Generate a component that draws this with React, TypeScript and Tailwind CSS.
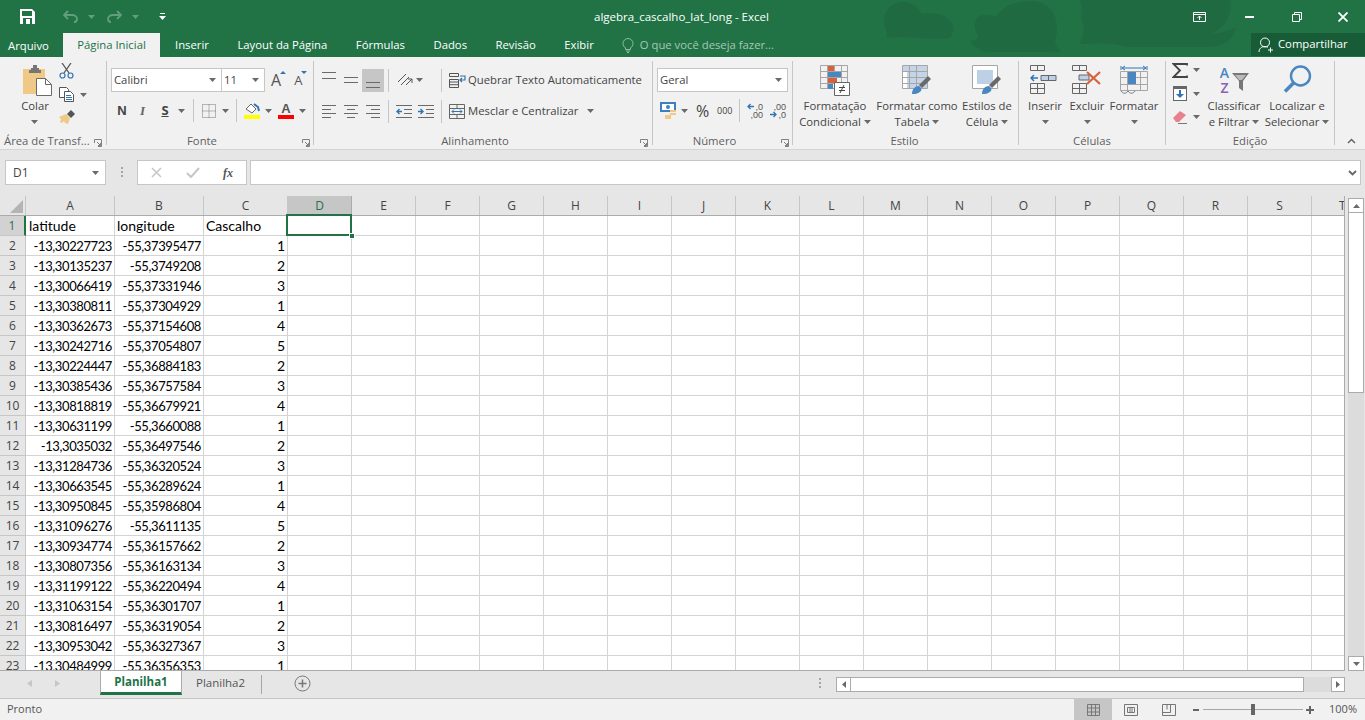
import type { ReactNode } from 'react';

const rows: [string, string, string][] = [
  ['-13,30227723', '-55,37395477', '1'],
  ['-13,30135237', '-55,3749208', '2'],
  ['-13,30066419', '-55,37331946', '3'],
  ['-13,30380811', '-55,37304929', '1'],
  ['-13,30362673', '-55,37154608', '4'],
  ['-13,30242716', '-55,37054807', '5'],
  ['-13,30224447', '-55,36884183', '2'],
  ['-13,30385436', '-55,36757584', '3'],
  ['-13,30818819', '-55,36679921', '4'],
  ['-13,30631199', '-55,3660088', '1'],
  ['-13,3035032', '-55,36497546', '2'],
  ['-13,31284736', '-55,36320524', '3'],
  ['-13,30663545', '-55,36289624', '1'],
  ['-13,30950845', '-55,35986804', '4'],
  ['-13,31096276', '-55,3611135', '5'],
  ['-13,30934774', '-55,36157662', '2'],
  ['-13,30807356', '-55,36163134', '3'],
  ['-13,31199122', '-55,36220494', '4'],
  ['-13,31063154', '-55,36301707', '1'],
  ['-13,30816497', '-55,36319054', '2'],
  ['-13,30953042', '-55,36327367', '3'],
  ['-13,30484999', '-55,36356353', '1'],
];

const plainCols = ['E', 'F', 'G', 'H', 'I', 'J', 'K', 'L', 'M', 'N', 'O', 'P', 'Q', 'R', 'S'];
const gridCols = 'grid grid-cols-[26px_89px_89px_84px_64px_repeat(15,64px)_33px]';

function Caret({ className = '' }: { className?: string }) {
  return (
    <svg width="7" height="4" viewBox="0 0 7 4" className={`shrink-0 ${className}`}>
      <path d="M0 0h7L3.5 4z" fill="#6a6a6a" />
    </svg>
  );
}

function Launcher() {
  return (
    <svg width="8" height="8" viewBox="0 0 8 8" className="shrink-0">
      <path d="M.5 4V.5h7v7H4M3 3l3.5 3.5M6.5 4v2.5H4" fill="none" stroke="#808080" />
    </svg>
  );
}

function Sep() {
  return <div className="w-px h-[23px] bg-[#c6c6c6] shrink-0" />;
}

function Group({ width, label, labelWidth, children }: { width: string; label: string; labelWidth?: string; children: ReactNode }) {
  return (
    <div className={`${width} shrink-0 h-[84px] border-r border-[#c6c6c6] flex flex-col relative`}>
      <div className="flex-1 min-h-0">{children}</div>
      <div className={`h-[14px] relative top-[3px] flex items-center text-[11.3px] text-[#5f5f5f] ${labelWidth ?? ''}`}>{label}</div>
    </div>
  );
}

function LargeBtn({ w, icon, a, b, ml = 'ml-0' }: { w: string; icon: ReactNode; a: string; b?: string; ml?: string }) {
  return (
    <div className={`${w} ${ml} shrink-0 flex flex-col items-center text-[11.3px] text-[#444] leading-[16px]`}>
      <div className="h-[37px] flex items-start justify-center pt-[4px]">{icon}</div>
      <div className="whitespace-nowrap">{a}</div>
      <div className="flex items-center gap-[3px] whitespace-nowrap h-[16px]">
        {b}
        <Caret />
      </div>
    </div>
  );
}

function Lines({ kind }: { kind: 'left' | 'center' | 'right' }) {
  const d = {
    left: 'M0 .5h14M0 4.5h9M0 8.5h14M0 12.5h9',
    center: 'M0 .5h14M3 4.5h8M0 8.5h14M3 12.5h8',
    right: 'M0 .5h14M5 4.5h9M0 8.5h14M5 12.5h9',
  }[kind];
  return (
    <svg width="14" height="13" viewBox="0 0 14 13">
      <path d={d} stroke="#6a6a6a" fill="none" />
    </svg>
  );
}

function VAlign({ kind }: { kind: 'top' | 'mid' | 'bottom' }) {
  const d = {
    top: 'M0 3.5h14M0 9.5h14',
    mid: 'M0 8.5h14M0 13.5h14',
    bottom: 'M0 13.5h14M0 18.5h14',
  }[kind];
  return (
    <svg width="14" height="23" viewBox="0 0 14 23">
      <path d={d} stroke="#6a6a6a" fill="none" />
    </svg>
  );
}

function Paste() {
  return (
    <svg width="30" height="31" viewBox="0 0 30 31">
      <path d="M1 4h22v25H1z" fill="#f0c987" />
      <path d="M9 3h2V0h4v3h2v2h2v3H7V5h2z" fill="#767676" />
      <path d="M14.5 13.5h9l6 6v11h-15z" fill="#fff" stroke="#6a6a6a" />
      <path d="M23.5 13.5v6h6" fill="none" stroke="#6a6a6a" />
    </svg>
  );
}

function Cut() {
  return (
    <svg width="15" height="16" viewBox="0 0 15 16" fill="none">
      <path d="M3 0l7 10M12 0L5 10" stroke="#555" strokeWidth="1.3" />
      <circle cx="3.5" cy="12.5" r="2.5" stroke="#2f75b5" strokeWidth="1.2" />
      <circle cx="11.5" cy="12.5" r="2.5" stroke="#2f75b5" strokeWidth="1.2" />
    </svg>
  );
}

function Copy() {
  return (
    <svg width="16" height="15" viewBox="0 0 16 15" fill="#fff" stroke="#555">
      <path d="M.5.5h7l2 2v8h-9z" />
      <path d="M5.5 4.5h6l3 3v7h-9z" />
      <path d="M7 8.5h5M7 10.5h6M7 12.5h6" stroke="#2f75b5" />
    </svg>
  );
}

function Painter() {
  return (
    <svg width="16" height="15" viewBox="0 0 16 15">
      <path d="M0 7l7-3 4 4-2 6-3-1-1-2-2 2-2-1 1-3z" fill="#f0c987" />
      <path d="M8 4l4-4 4 4-4 4z" fill="#555" />
    </svg>
  );
}

function Borders() {
  return (
    <svg width="14" height="14" viewBox="0 0 14 14" fill="none">
      <path d="M.5.5h13v13H.5zM7 .5v13M.5 7h13" stroke="#777" strokeDasharray="1 1" />
    </svg>
  );
}

function Orient() {
  return (
    <svg width="16" height="14" viewBox="0 0 16 14" fill="none" stroke="#555">
      <path d="M1 9l8-8M4 12l8-8" />
      <path d="M9 12l6-6M15 6v4M15 6h-4" />
    </svg>
  );
}

function Indent({ out }: { out?: boolean }) {
  return (
    <svg width="16" height="13" viewBox="0 0 16 13" fill="none">
      <path d="M0 .5h16M8 4.5h8M8 8.5h8M0 12.5h16" stroke="#6a6a6a" />
      <path d={out ? 'M6 6.5H1M3.5 4L1 6.5 3.5 9' : 'M0 6.5h5M2.5 4L5 6.5 2.5 9'} stroke="#2f75b5" strokeWidth="1.4" />
    </svg>
  );
}

function Wrap() {
  return (
    <svg width="17" height="15" viewBox="0 0 17 15" fill="none">
      <path d="M.5.5h9v3h-9zM.5 6.5h9v8h-9zM.5 9h9M.5 11.7h9" stroke="#555" />
      <path d="M11 3h5v4h-5M13 5l-2 2 2 2" stroke="#2f75b5" strokeWidth="1.2" />
    </svg>
  );
}

function Merge() {
  return (
    <svg width="16" height="15" viewBox="0 0 16 15" fill="none">
      <path d="M.5.5h15v14H.5zM.5 4.5h15M.5 10.5h15M8 .5v4M8 10.5v4" stroke="#666" />
      <path d="M3 7.5h10M5 5.5l-2 2 2 2M11 5.5l2 2-2 2" stroke="#2f75b5" />
    </svg>
  );
}

function Money() {
  return (
    <svg width="17" height="17" viewBox="0 0 17 17">
      <path d="M0 0h16v10H0z" fill="#3f7fbf" />
      <path d="M2 2h12v6H2z" fill="#fff" />
      <circle cx="8" cy="5" r="2" fill="#3f7fbf" />
      <path d="M10 8h6v2h-6zM10 11h6v2h-6zM5 13h6v2H5zM5 15h6v2H5z" fill="#f0c987" />
    </svg>
  );
}

function DecimalArrow({ left }: { left?: boolean }) {
  return (
    <svg width="7" height="7" viewBox="0 0 7 7" fill="none">
      <path d={left ? 'M7 3.5H1M3.5 1L1 3.5 3.5 6' : 'M0 3.5h6M3.5 1L6 3.5 3.5 6'} stroke="#2f75b5" strokeWidth="1.3" />
    </svg>
  );
}

function Dec({ more }: { more?: boolean }) {
  return (
    <div className="w-[16px] flex flex-col text-[9px] leading-[8px] text-[#555] font-['Liberation_Sans']">
      {more ? (
        <>
          <div className="flex items-center justify-between"><DecimalArrow left /><span>,0</span></div>
          <div className="text-right">,00</div>
        </>
      ) : (
        <>
          <div className="text-right">,00</div>
          <div className="flex items-center justify-between"><DecimalArrow /><span>,0</span></div>
        </>
      )}
    </div>
  );
}

function CondFormat() {
  return (
    <svg width="30" height="31" viewBox="0 0 30 31">
      <path d="M.5.5h27v23H.5zM.5 6.5h27M.5 12.5h27M.5 18.5h27M7.5.5v23M14.5.5v23M21.5.5v23" fill="none" stroke="#a6a6a6" />
      <path d="M8 1h6v5H8z" fill="#d8613c" />
      <path d="M8 7h13v5H8z" fill="#4a86c0" />
      <path d="M8 13h9v5H8z" fill="#d8613c" />
      <path d="M8 19h5v5H8z" fill="#4a86c0" />
      <path d="M14.5 17.5h15v13h-15z" fill="#fff" stroke="#666" />
      <path d="M19 22.5h6M19 25.5h6M24 20l-4 8" stroke="#444" fill="none" />
    </svg>
  );
}

function TableStyle({ cell }: { cell?: boolean }) {
  return (
    <svg width="30" height="30" viewBox="0 0 30 30">
      <path d="M.5.5h25v23H.5z" fill="#fff" stroke="#a6a6a6" />
      {cell ? (
        <path d="M5 5h16v14H5z" fill="#bed0e6" />
      ) : (
        <path d="M1 1h24v5H1z M5 7h20v16H5z" fill="#c5d4e6" />
      )}
      {!cell && <path d="M.5 6.5h25M.5 12.5h25M.5 18.5h25M7.5.5v23M14.5.5v23" fill="none" stroke="#a6a6a6" />}
      <path d="M17 20l9-9 3 3-9 9z" fill="#6a6a6a" />
      <path d="M10 29c0-5 3-8 7-8 2 1 3 3 2 5-3 3-6 3-9 3z" fill="#4a86c0" />
    </svg>
  );
}

function InsertCells({ del }: { del?: boolean }) {
  return (
    <svg width="30" height="29" viewBox="0 0 30 29" fill="none">
      <path d="M.5.5h14v5H.5zM7.5.5v5M.5 18.5h14v10H.5zM.5 23.5h14M7.5 18.5v10" stroke="#666" />
      {del ? (
        <>
          <path d="M7 10h10v5H7z" fill="#bed0e6" stroke="#666" />
          <path d="M15 7l13 12M28 7L15 19" stroke="#d8613c" strokeWidth="2.2" />
        </>
      ) : (
        <>
          <path d="M11 10.5h15v5H11z M18.5 10.5v5" fill="#bed0e6" stroke="#666" />
          <path d="M8 13H1M4 10l-3 3 3 3" stroke="#2f75b5" strokeWidth="1.5" />
        </>
      )}
    </svg>
  );
}

function FormatCells() {
  return (
    <svg width="29" height="30" viewBox="0 0 29 30" fill="none">
      <path d="M1 1v4M27 1v4M2 3h24M5 1L2 3l3 2M23 1l3 2-3 2" stroke="#2f75b5" />
      <path d="M.5 6.5h27v19H.5zM7.5 6.5v19M20.5 6.5v19M.5 12.5h27M.5 19.5h27" stroke="#a6a6a6" />
      <path d="M8 7h8v12H8z" fill="#4a86c0" />
      <path d="M1 26c2 3 5 3 7 0M8 26c2 3 5 3 7 0" stroke="#777" />
    </svg>
  );
}

function Sigma() {
  return (
    <svg width="16" height="15" viewBox="0 0 16 15" fill="none">
      <path d="M15 2.5V1H1.5L8 7.5 1.5 14H15v-1.5" stroke="#444" strokeWidth="1.8" />
    </svg>
  );
}

function Fill() {
  return (
    <svg width="14" height="15" viewBox="0 0 14 15">
      <path d="M0 0h14v15H0z" fill="#666" />
      <path d="M1 3h12v11H1z" fill="#fff" />
      <path d="M6 4h2v4h3l-4 4-4-4h3z" fill="#2f75b5" />
    </svg>
  );
}

function Eraser() {
  return (
    <svg width="14" height="14" viewBox="0 0 14 14">
      <path d="M0 8l7-7 6 4-7 7H3z" fill="#e8808f" />
      <path d="M5 13.5h9" stroke="#777" />
    </svg>
  );
}

function SortFilter() {
  return (
    <div className="flex w-[31px] h-[30px] font-['Open_Sans'] font-semibold text-[14px] leading-[15px]">
      <div className="flex flex-col w-[12px] items-center">
        <span className="text-[#4a86c0]">A</span>
        <span className="text-[#8e5fb5]">Z</span>
      </div>
      <svg width="19" height="22" viewBox="0 0 19 22" fill="none" className="mt-[6px]">
        <path d="M1 2h17l-6 8v10l-4-3v-7z" fill="#777" />
        <path d="M4 4h11l-4 5H8z" fill="#bbb" />
      </svg>
    </div>
  );
}

function Search() {
  return (
    <svg width="29" height="29" viewBox="0 0 29 29" fill="none">
      <circle cx="17.5" cy="11" r="9.5" stroke="#4a86c0" strokeWidth="2.4" />
      <path d="M10.5 18L2 26.5" stroke="#4a86c0" strokeWidth="3.5" />
    </svg>
  );
}

function Clipboard() {
  return (
    <Group width="w-[107px]" label="Área de Transf..." labelWidth="pl-[4px]">
      <div className="flex h-full pt-[4px]">
        <div className="w-[59px] shrink-0 flex flex-col items-center text-[11.3px] text-[#444] pl-[22px] pr-[8px]">
          <div className="h-[33px]">
            <Paste />
          </div>
          <div className="leading-[16px] -ml-[3px]">Colar</div>
          <Caret className="mt-[6px] -ml-[5px]" />
        </div>
        <div className="flex flex-col gap-[8px] -mt-[2px]">
          <Cut />
          <div className="flex items-center gap-[5px]">
            <Copy />
            <Caret />
          </div>
          <Painter />
        </div>
      </div>
      <div className="absolute right-[4px] -bottom-[2px]">
        <Launcher />
      </div>
    </Group>
  );
}

function Combo({ w, text, className = '' }: { w: string; text: string; className?: string }) {
  return (
    <div className={`${w} h-[24px] bg-white border border-[#c6c6c6] flex items-center justify-between px-[2px] text-[11.3px] text-[#444] ${className}`}>
      <span>{text}</span>
      <Caret className="mr-[3px]" />
    </div>
  );
}

function Font() {
  return (
    <Group width="w-[207px]" label="Fonte" labelWidth="justify-center pr-[16px]">
      <div className="pl-[4px] pt-[7px]">
        <div className="flex items-center">
          <Combo w="w-[111px]" text="Calibri" />
          <Combo w="w-[44px]" text="11" className="-ml-px" />
          <span className="ml-[6px] text-[16px] leading-none text-[#555] relative">
            A<span className="absolute -top-[1px] -right-[5px] border-x-[3px] border-b-[3px] border-x-transparent border-b-[#2f75b5]" />
          </span>
          <span className="ml-[13px] text-[13px] leading-none text-[#555] relative">
            A<span className="absolute -top-[3px] -right-[5px] border-x-[3px] border-t-[3px] border-x-transparent border-t-[#2f75b5]" />
          </span>
        </div>
        <div className="flex items-center h-[23px] mt-[7px] text-[13px] text-[#444]">
          <span className="ml-[1px] w-[20px] font-bold text-center font-['Liberation_Sans']">N</span>
          <span className="w-[21px] italic font-bold text-center text-[#666] font-['Liberation_Serif']">I</span>
          <span className="w-[24px] font-bold underline text-center">S</span>
          <Caret className="ml-[1px]" />
          <div className="ml-[8px]"><Sep /></div>
          <div className="ml-[8px]"><Borders /></div>
          <Caret className="ml-[6px]" />
          <div className="ml-[7px]"><Sep /></div>
          <div className="ml-[7px] w-[16px] flex flex-col items-center">
            <svg width="15" height="13" viewBox="0 0 15 13" fill="none">
              <path d="M1 7l5-5 5 5-4 4z" fill="#fff" stroke="#666" />
              <path d="M9 2l4 3 1 4" stroke="#2f75b5" strokeWidth="2" />
            </svg>
            <div className="w-[16px] h-[4px] bg-[#ffff00]" />
          </div>
          <Caret className="ml-[5px]" />
          <div className="ml-[6px] w-[16px] flex flex-col items-center">
            <span className="h-[13px] leading-[13px] font-bold text-[#555] font-['Liberation_Sans']">A</span>
            <div className="w-[16px] h-[4px] bg-[#ff0000]" />
          </div>
          <Caret className="ml-[5px]" />
        </div>
      </div>
      <div className="absolute right-[3px] -bottom-[2px]">
        <Launcher />
      </div>
    </Group>
  );
}

function Align() {
  return (
    <Group width="w-[339px]" label="Alinhamento" labelWidth="justify-center pr-[16px]">
      <div className="pl-[8px] pt-[7px]">
        <div className="flex items-center h-[24px]">
          <div className="w-[22px]"><VAlign kind="top" /></div>
          <div className="w-[18px]"><VAlign kind="mid" /></div>
          <div className="w-[22px] h-[23px] bg-[#c6c6c6] flex items-center justify-center">
            <VAlign kind="bottom" />
          </div>
          <div className="ml-[4px]"><Sep /></div>
          <div className="ml-[8px]"><Orient /></div>
          <Caret className="ml-[3px]" />
          <div className="ml-[18px]"><Sep /></div>
          <div className="ml-[7px] mr-[2px]"><Wrap /></div>
          <span className="text-[11.3px] text-[#444] whitespace-nowrap">Quebrar Texto Automaticamente</span>
        </div>
        <div className="flex items-center h-[24px] mt-[7px]">
          <div className="w-[22px]"><Lines kind="left" /></div>
          <div className="w-[22px]"><Lines kind="center" /></div>
          <div className="w-[22px]"><Lines kind="right" /></div>
          <Sep />
          <div className="ml-[7px]"><Indent out /></div>
          <div className="ml-[6px]"><Indent /></div>
          <div className="ml-[7px]"><Sep /></div>
          <div className="ml-[7px] mr-[3px]"><Merge /></div>
          <span className="text-[11.3px] text-[#444] whitespace-nowrap">Mesclar e Centralizar</span>
          <Caret className="ml-[9px]" />
        </div>
      </div>
      <div className="absolute right-[4px] -bottom-[2px]">
        <Launcher />
      </div>
    </Group>
  );
}

function Numero() {
  return (
    <Group width="w-[140px]" label="Número" labelWidth="justify-center pr-[16px]">
      <div className="pl-[4px] pt-[7px]">
        <Combo w="w-[131px]" text="Geral" />
        <div className="flex items-center h-[23px] mt-[7px] text-[#444]">
          <div className="ml-[3px]"><Money /></div>
          <Caret className="ml-[4px]" />
          <span className="ml-[8px] text-[16px] w-[14px]">%</span>
          <span className="ml-[7px] text-[9px] w-[15px]">000</span>
          <div className="ml-[7px]"><Sep /></div>
          <div className="ml-[7px]"><Dec more /></div>
          <div className="ml-[7px]"><Dec /></div>
        </div>
      </div>
      <div className="absolute right-[3px] -bottom-[2px]">
        <Launcher />
      </div>
    </Group>
  );
}

function Estilo() {
  return (
    <Group width="w-[226px]" label="Estilo" labelWidth="justify-center pr-[2px]">
      <div className="flex">
        <LargeBtn w="w-[80px]" ml="ml-[2px]" icon={<CondFormat />} a="Formatação" b="Condicional" />
        <LargeBtn w="w-[84px]" icon={<TableStyle />} a="Formatar como" b="Tabela" />
        <LargeBtn w="w-[52px]" ml="ml-[2px]" icon={<TableStyle cell />} a="Estilos de" b="Célula" />
      </div>
    </Group>
  );
}

function Celulas() {
  return (
    <Group width="w-[147px]" label="Células" labelWidth="justify-center">
      <div className="flex">
        <LargeBtn w="w-[40px]" ml="ml-[6px]" icon={<InsertCells />} a="Inserir" />
        <LargeBtn w="w-[44px]" icon={<InsertCells del />} a="Excluir" />
        <LargeBtn w="w-[50px]" icon={<FormatCells />} a="Formatar" />
      </div>
    </Group>
  );
}

function Edicao() {
  return (
    <Group width="w-[169px]" label="Edição" labelWidth="justify-center">
      <div className="flex">
        <div className="ml-[6px] w-[32px] flex flex-col gap-[8px] pt-[1px]">
          <div className="flex items-center gap-[5px] h-[16px]"><Sigma /><Caret /></div>
          <div className="flex items-center gap-[6px] h-[15px] ml-[1px]"><Fill /><Caret /></div>
          <div className="flex items-center gap-[6px] h-[15px] ml-[1px]"><Eraser /><Caret /></div>
        </div>
        <LargeBtn w="w-[60px]" icon={<SortFilter />} a="Classificar" b="e Filtrar" />
        <LargeBtn w="w-[66px]" icon={<Search />} a="Localizar e" b="Selecionar" />
      </div>
    </Group>
  );
}

function TitleBar() {
  return (
    <div className="h-[33px] flex items-center relative text-white shrink-0">
      <svg width="15" height="15" viewBox="0 0 15 15" className="ml-[20px]">
        <path d="M0 0h12l3 3v12H0z" fill="#fff" />
        <path d="M2 2h10v5H2zM3 9h9v6H3z" fill="#217346" />
        <path d="M6 10h4v5H6z" fill="#fff" />
      </svg>
      <svg width="15" height="13" viewBox="0 0 15 13" fill="none" className="ml-[28px] opacity-30">
        <path d="M5 1L1 5l4 4M1 5h8c3 0 5 2 5 4s-1 3-3 3" stroke="#fff" strokeWidth="1.8" />
      </svg>
      <svg width="7" height="4" viewBox="0 0 7 4" className="ml-[10px] opacity-30"><path d="M0 0h7L3.5 4z" fill="#fff" /></svg>
      <svg width="15" height="13" viewBox="0 0 15 13" fill="none" className="ml-[12px] opacity-30">
        <path d="M10 1l4 4-4 4M14 5H6C3 5 1 7 1 9s1 3 3 3" stroke="#fff" strokeWidth="1.8" />
      </svg>
      <svg width="7" height="4" viewBox="0 0 7 4" className="ml-[10px] opacity-30"><path d="M0 0h7L3.5 4z" fill="#fff" /></svg>
      <svg width="7" height="7" viewBox="0 0 7 7" className="ml-[20px]">
        <path d="M1 .5h5" stroke="#fff" />
        <path d="M0 3h7L3.5 7z" fill="#fff" />
      </svg>
      <div className="absolute left-[594px] top-[9px] text-[11.5px] leading-[16px] whitespace-nowrap">algebra_cascalho_lat_long - Excel</div>
      <div className="ml-auto flex items-center">
        <svg width="13" height="10" viewBox="0 0 13 10" fill="none" className="mr-[39px]">
          <path d="M.5.5h12v9H.5zM.5 2.5h12" stroke="#fff" />
          <path d="M6.5 8V4M4.5 6l2-2 2 2" stroke="#fff" />
        </svg>
        <div className="w-[9px] h-[2px] bg-white mr-[38px]" />
        <svg width="10" height="10" viewBox="0 0 10 10" fill="none" className="mr-[36px]">
          <path d="M.5 2.5h7v7h-7zM2.5 2.5V.5h7v7h-2" stroke="#fff" />
        </svg>
        <svg width="10" height="10" viewBox="0 0 10 10" fill="none" className="mr-[17px]">
          <path d="M.5.5l9 9M9.5.5l-9 9" stroke="#fff" strokeWidth="1.8" />
        </svg>
      </div>
    </div>
  );
}

function TabsBar() {
  const tabs = ['Inserir', 'Layout da Página', 'Fórmulas', 'Dados', 'Revisão', 'Exibir'];
  return (
    <div className="h-[24px] flex items-stretch text-white text-[11.3px] shrink-0">
      <div className="w-[63px] pl-[8px] flex items-center pt-[2px]">Arquivo</div>
      <div className="w-[97px] bg-[#f1f1f1] text-[#217346] flex items-center justify-center">Página Inicial</div>
      <div className="flex items-center gap-[28.5px] ml-[15px]">
        {tabs.map((t) => (
          <span key={t}>{t}</span>
        ))}
      </div>
      <svg width="12" height="15" viewBox="0 0 12 15" fill="none" className="ml-[28px] self-center opacity-50">
        <path d="M3.5 10C2 8.5 1 7.5 1 5.5a5 5 0 0 1 10 0c0 2-1 3-2.5 4.5v1.500h-5zM4 13h4M5 14.5h2" stroke="#fff" />
      </svg>
      <span className="ml-[6px] self-center text-[#a7c7b5]">O que você deseja fazer...</span>
      <div className="ml-auto w-[114px] h-[23px] bg-[#185c37] flex items-center pl-[7px] gap-[4px]">
        <svg width="16" height="16" viewBox="0 0 16 16" fill="none">
          <circle cx="7" cy="5.5" r="4.5" stroke="#fff" />
          <path d="M1 15c0-3.5 2.5-5.5 6-5.5 1 0 2 .2 3 .7M12.5 10.5v5M10 13h5" stroke="#fff" />
        </svg>
        <span>Compartilhar</span>
      </div>
    </div>
  );
}

function FormulaBar() {
  return (
    <div className="h-[46px] shrink-0 bg-[#e6e6e6] flex items-start pt-[10px] pl-[5px] font-['Open_Sans']">
      <div className="w-[101px] h-[25px] bg-white border border-[#c6c6c6] flex items-center justify-between pl-[7px] pr-[6px] text-[12px] text-[#444]">
        D1
        <Caret />
      </div>
      <svg width="3" height="11" viewBox="0 0 3 11" className="ml-[15px] mt-[7px]">
        <path d="M0 0h2v2H0zM0 4h2v2H0zM0 8h2v2H0z" fill="#a6a6a6" />
      </svg>
      <div className="ml-[13px] w-[110px] h-[25px] bg-white border border-[#c6c6c6] flex items-center pl-[13px]">
        <svg width="11" height="11" viewBox="0 0 11 11" fill="none"><path d="M1 1l9 9M10 1l-9 9" stroke="#c6c6c6" strokeWidth="1.5" /></svg>
        <svg width="14" height="11" viewBox="0 0 14 11" fill="none" className="ml-[24px]"><path d="M1 6l4 4 8-9" stroke="#c6c6c6" strokeWidth="2" /></svg>
        <span className="ml-[23px] font-['Liberation_Serif'] italic font-bold text-[12px] text-[#555]">fx</span>
      </div>
      <div className="ml-[3px] w-[1111px] h-[25px] bg-white border border-[#c6c6c6] flex items-center justify-end pr-[3px]">
        <svg width="9" height="6" viewBox="0 0 9 6" fill="none"><path d="M1 1l3.5 3.5L8 1" stroke="#666" strokeWidth="1.8" /></svg>
      </div>
    </div>
  );
}

function Sheet() {
  const hdr = 'flex items-center justify-center border-r border-[#c6c6c6] bg-[#e6e6e6] text-[#444] h-[19px]';
  const cell = 'border-r border-b border-[#d4d4d4] h-[20px] bg-white overflow-hidden leading-[20px] whitespace-nowrap';
  return (
    <div className="flex-1 min-w-0 h-full relative overflow-hidden border-r border-b border-[#ababab] font-[Lato,sans-serif] text-[14px] text-black bg-white">
      <div className={`${gridCols} border-b border-[#ababab] h-[20px] font-['Open_Sans'] text-[12px]`}>
        <div className="bg-[#e6e6e6] h-[19px] border-r border-[#c6c6c6] flex items-end justify-end pr-[2px] pb-[2px]">
          <svg width="13" height="13" viewBox="0 0 13 13"><path d="M13 0v13H0z" fill="#b4b4b4" /></svg>
        </div>
        {['A', 'B', 'C'].map((c) => (
          <div key={c} className={hdr}>{c}</div>
        ))}
        <div className="flex items-center justify-center border-r border-[#ababab] bg-[#c6c6c6] text-[#217346] h-[19px]">D</div>
        {plainCols.map((c) => (
          <div key={c} className={hdr}>{c}</div>
        ))}
        <div className="flex items-center bg-[#e6e6e6] text-[#444] h-[19px] pl-[27px]">T</div>
      </div>
      <div className={gridCols}>
        <div className="bg-[#d2d2d2] text-[#217346] border-b border-[#c6c6c6] border-r-2 border-r-[#217346] h-[20px] flex items-center justify-center font-['Open_Sans'] text-[12px]">1</div>
        <div className={`${cell} pl-[3px]`}>latitude</div>
        <div className={`${cell} pl-[2px]`}>longitude</div>
        <div className={`${cell} pl-[2px]`}>Cascalho</div>
        {Array.from({ length: 17 }).map((_, i) => (
          <div key={i} className={cell} />
        ))}
      </div>
      {rows.map((r, i) => (
        <div key={i} className={gridCols}>
          <div className="bg-[#e6e6e6] text-[#444] border-b border-r border-[#c6c6c6] h-[20px] flex items-center justify-center font-['Open_Sans'] text-[12px]">{i + 2}</div>
          <div className={`${cell} text-right pr-[2px] text-[13px] tracking-[-0.4px]`}>{r[0]}</div>
          <div className={`${cell} text-right pr-[2px] text-[13px] tracking-[-0.4px]`}>{r[1]}</div>
          <div className={`${cell} text-right pr-[2px]`}>{r[2]}</div>
          {Array.from({ length: 17 }).map((_, k) => (
            <div key={k} className={cell} />
          ))}
        </div>
      ))}
      <div className="absolute left-[286px] top-[18px] w-[66px] h-[22px] border-2 border-[#217346]" />
      <div className="absolute left-[349px] top-[37px] w-[6px] h-[6px] bg-[#217346] border border-white" />
    </div>
  );
}

function VScroll() {
  return (
    <div className="w-[20px] shrink-0 h-full bg-[#e6e6e6] pl-[3px] pt-[2px] flex flex-col">
      <div className="w-[16px] h-[15px] bg-white border border-[#ababab] flex items-center justify-center">
        <svg width="7" height="4" viewBox="0 0 7 4"><path d="M0 4h7L3.5 0z" fill="#6a6a6a" /></svg>
      </div>
      <div className="w-[16px] h-[180px] bg-white border-x border-b border-[#ababab]" />
      <div className="w-[16px] flex-1 bg-[#dcdcdc]" />
      <div className="w-[16px] h-[15px] bg-white border border-[#ababab] flex items-center justify-center">
        <svg width="7" height="4" viewBox="0 0 7 4"><path d="M0 0h7L3.5 4z" fill="#6a6a6a" /></svg>
      </div>
    </div>
  );
}

function SheetTabs() {
  return (
    <div className="h-[27px] shrink-0 bg-[#e6e6e6] flex items-start font-['Open_Sans'] text-[11.5px]">
      <svg width="5" height="7" viewBox="0 0 5 7" className="ml-[27px] mt-[9px]"><path d="M5 0v7L0 3.5z" fill="#c6c6c6" /></svg>
      <svg width="5" height="7" viewBox="0 0 5 7" className="ml-[23px] mt-[9px]"><path d="M0 0v7l5-3.5z" fill="#c6c6c6" /></svg>
      <div className="ml-[40px] w-[82px] h-[24px] bg-white border-x border-[#ababab] border-b-[3px] border-b-[#217346] flex items-center justify-center font-bold text-[#217346]">Planilha1</div>
      <div className="ml-[14px] h-[24px] flex items-center text-[#555]">Planilha2</div>
      <div className="ml-[16px] mt-[4px] w-px h-[19px] bg-[#a6a6a6]" />
      <svg width="17" height="17" viewBox="0 0 17 17" fill="none" className="ml-[32px] mt-[4px]">
        <circle cx="8.5" cy="8.5" r="7.5" stroke="#777" />
        <path d="M8.5 4.5v8M4.5 8.5h8" stroke="#777" strokeWidth="1.5" />
      </svg>
      <svg width="3" height="11" viewBox="0 0 3 11" className="ml-[508px] mt-[7px]">
        <path d="M0 0h2v2H0zM0 4h2v2H0zM0 8h2v2H0z" fill="#a6a6a6" />
      </svg>
      <div className="ml-[14px] mt-[6px] flex h-[15px]">
        <div className="w-[15px] bg-white border border-[#ababab] flex items-center justify-center">
          <svg width="4" height="7" viewBox="0 0 4 7"><path d="M4 0v7L0 3.5z" fill="#6a6a6a" /></svg>
        </div>
        <div className="w-[453px] bg-white border-y border-r border-[#ababab]" />
        <div className="w-[27px] bg-[#dcdcdc]" />
        <div className="w-[14px] bg-white border border-[#ababab] flex items-center justify-center">
          <svg width="4" height="7" viewBox="0 0 4 7"><path d="M0 0v7l4-3.5z" fill="#6a6a6a" /></svg>
        </div>
      </div>
    </div>
  );
}

function StatusBar() {
  return (
    <div className="h-[22px] shrink-0 bg-[#f1f1f1] border-t border-[#c6c6c6] flex items-center font-['Open_Sans'] text-[11px] text-[#555]">
      <span className="ml-[7px]">Pronto</span>
      <div className="ml-auto h-full w-[38px] bg-[#c6c6c6] flex items-center justify-center">
        <svg width="13" height="12" viewBox="0 0 13 12" fill="none"><path d="M.5.5h12v11H.5zM.5 4h12M.5 8h12M4.5.5v11M8.5.5v11" stroke="#777" /></svg>
      </div>
      <svg width="14" height="12" viewBox="0 0 14 12" fill="none" className="ml-[12px]"><path d="M.5.5h13v11H.5zM3.5 3.5h7v5h-7zM5 5h4M5 7h4" stroke="#777" /></svg>
      <svg width="14" height="12" viewBox="0 0 14 12" fill="none" className="ml-[24px]"><path d="M.5.5h13v11H.5zM.5 8.5h8V.5M5 .5v5" stroke="#777" /></svg>
      <div className="ml-[17px] w-[6px] h-[2px] bg-[#666]" />
      <div className="ml-[4px] w-[100px] h-px bg-[#a6a6a6] relative">
        <div className="absolute left-[48px] -top-[5px] w-[4px] h-[11px] bg-[#666]" />
      </div>
      <svg width="8" height="8" viewBox="0 0 8 8" className="ml-[3px]"><path d="M3 0h2v3h3v2H5v3H3V5H0V3h3z" fill="#666" /></svg>
      <span className="ml-[15px] mr-[8px]">100%</span>
    </div>
  );
}

export default function App() {
  return (
    <div className="w-[1365px] h-[720px] overflow-hidden flex flex-col bg-[#217346] font-['Open_Sans'] relative">
      <svg className="absolute left-[880px] top-0 pointer-events-none" width="370" height="57" viewBox="0 0 370 57">
        <path
          d="M6 38c2-4 1-6-1-10-4-12 3-26 18-26 9 0 15 5 19 12 10-3 27 0 31 12 2 4-1 8-3 12-15 3-45-3-66 0zM90 40c4 1 7 0 8-3-3-7-5-15 0-20 5-3 12-3 18 0 8-12 20-16 35-16 15 0 25 10 26 25 0 8-1 12-2 16 2 4 4 8 6 10-3 0-5 1-8 0H110c-10 0-18-6-20-12zM200 0h150c3 15-5 30-22 34 8 0 20-3 28-6-3 10-10 18-25 19h-85c-15-5-30-3-46-3 4-12 5-20 1-25 1-7 1-13-1-19z"
          fill="#1f6a41"
        />
      </svg>
      <div className="relative">
        <TitleBar />
        <TabsBar />
      </div>
      <div className="h-[93px] shrink-0 bg-[#f1f1f1] border-b border-[#d4d4d4] flex items-start pt-[4px] relative">
        <Clipboard />
        <Font />
        <Align />
        <Numero />
        <Estilo />
        <Celulas />
        <Edicao />
        <svg width="9" height="6" viewBox="0 0 9 6" fill="none" className="absolute left-[1347px] top-[81px]">
          <path d="M1 5l3.5-3.5L8 5" stroke="#666" strokeWidth="1.5" />
        </svg>
      </div>
      <FormulaBar />
      <div className="h-[475px] shrink-0 flex bg-[#e6e6e6]">
        <Sheet />
        <VScroll />
      </div>
      <SheetTabs />
      <StatusBar />
    </div>
  );
}
